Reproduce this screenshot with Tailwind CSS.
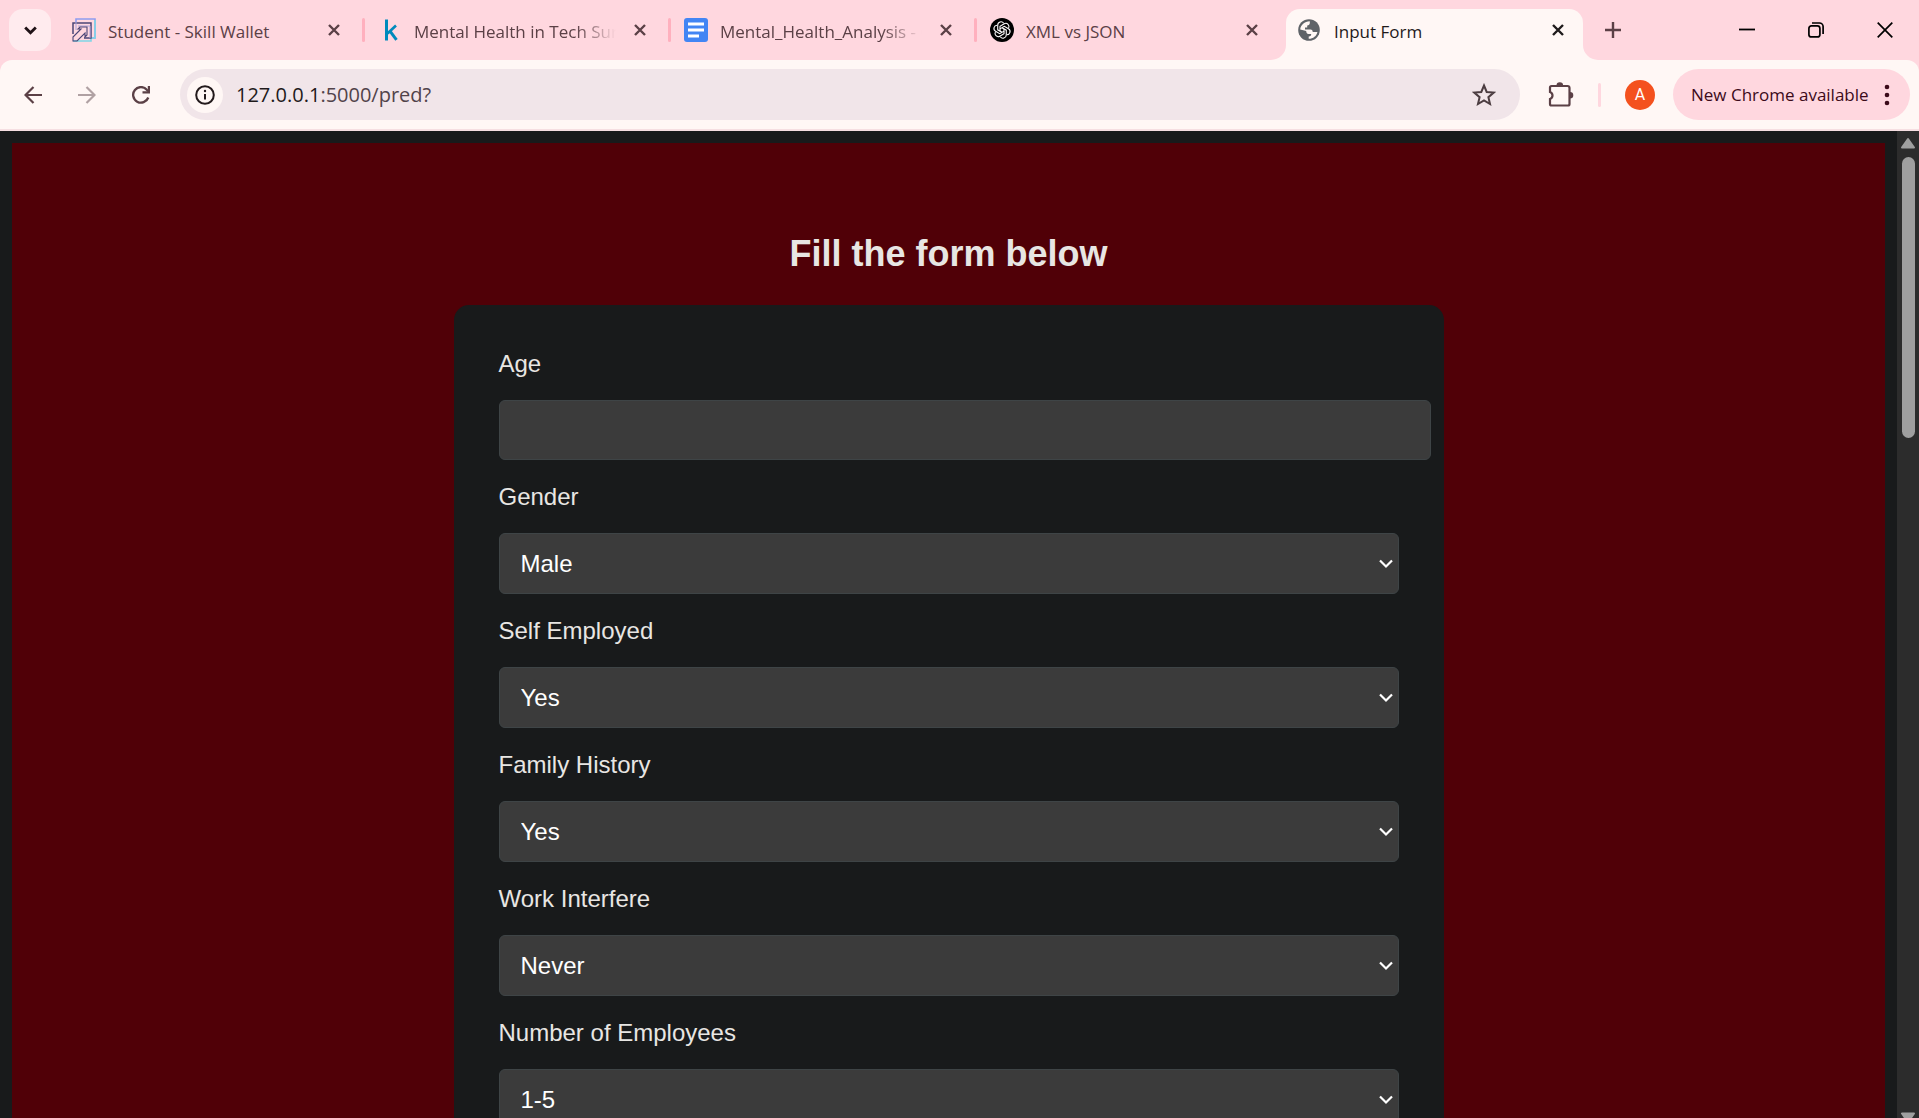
<!DOCTYPE html>
<html lang="en">
<head>
<meta charset="utf-8">
<meta name="viewport" content="width=device-width, initial-scale=1">
<title>Input Form</title>
<script src="https://cdn.jsdelivr.net/npm/@tailwindcss/browser@4"></script>
</head>
<body class="flex h-screen flex-col overflow-hidden bg-[#ffd7df] font-['Open_Sans','Noto_Sans',sans-serif] text-[17px] text-[#5b4046]">

<svg class="hidden" aria-hidden="true">
  <symbol id="x" viewBox="0 0 16 16"><path d="M3 3l10 10M13 3L3 13" fill="none" stroke="currentColor" stroke-width="2.4"/></symbol>
  <symbol id="chev" viewBox="0 0 14 10"><path d="M1 1.5l6 6 6-6" fill="none" stroke="currentColor" stroke-width="2.2"/></symbol>
</svg>

<!-- Tab strip -->
<header class="flex h-[60px] shrink-0 items-stretch">
  <button aria-label="Search tabs" class="my-[9px] ml-[9px] mr-2 flex w-[42px] shrink-0 items-center justify-center rounded-[14px] bg-[#ffebee] text-[#1f1216]">
    <svg class="h-[9px] w-[13px]" viewBox="0 0 13 9"><path d="M1.2 1.4l5.3 5.3 5.3-5.3" fill="none" stroke="currentColor" stroke-width="2.8"/></svg>
  </button>
  <nav class="flex min-w-0 flex-1 items-stretch" aria-label="Tabs">
    <div class="flex min-w-0 max-w-[306px] flex-1 items-center pl-[13px]">
      <svg class="size-6 shrink-0" viewBox="0 0 24 24" fill="none">
        <path d="M4 4V1h19v19h-3" stroke="#8f9df0" stroke-width="1.6"/><path d="M23 2v18h-4M1 23h18v-3" stroke="#7fd6e6" stroke-width="1.6"/>
        <path d="M1 16V5h18v15h-7" stroke="#4b4577" stroke-width="1.5"/><path d="M4 4v8M6 8h12v12" stroke="#a9a4dc"/>
        <path d="M1 23v-4l8-8H6l2-2h7v8l-2 2v-4l-8 8z" stroke="#4b4577" stroke-width="1.1"/>
      </svg>
      <a href="#" class="ml-3 mr-4 min-w-0 flex-1 overflow-hidden whitespace-nowrap pt-1">Student - Skill Wallet</a>
      <button aria-label="Close tab" class="mr-5"><svg class="size-4"><use href="#x"/></svg></button>
      <span class="h-6 w-[3px] shrink-0 rounded-sm bg-[#ffb0be]"></span>
    </div>
    <div class="flex min-w-0 max-w-[306px] flex-1 items-center pl-[13px]">
      <svg class="size-6 shrink-0" viewBox="0 0 24 24" fill="none" stroke="#008abc" stroke-width="3"><path d="M8.500 1.500v21"/><path d="M18 7.500L9.500 15.500" stroke-width="2.600"/><path d="M12 13.200l6.500 8.600"/></svg>
      <a href="#" class="ml-3 mr-4 min-w-0 flex-1 overflow-hidden whitespace-nowrap pt-1 [mask-image:linear-gradient(to_right,#000_80%,transparent)]">Mental Health in Tech Survey</a>
      <button aria-label="Close tab" class="mr-5"><svg class="size-4"><use href="#x"/></svg></button>
      <span class="h-6 w-[3px] shrink-0 rounded-sm bg-[#ffb0be]"></span>
    </div>
    <div class="flex min-w-0 max-w-[306px] flex-1 items-center pl-[13px]">
      <svg class="size-6 shrink-0" viewBox="0 0 24 24"><rect width="24" height="24" rx="3" fill="#4285f4"/><path d="M4 6h16M4 12h16M4 18h11" stroke="#fff" stroke-width="3"/></svg>
      <a href="#" class="ml-3 mr-4 min-w-0 flex-1 overflow-hidden whitespace-nowrap pt-1 [mask-image:linear-gradient(to_right,#000_80%,transparent)]">Mental_Health_Analysis - Google Docs</a>
      <button aria-label="Close tab" class="mr-5"><svg class="size-4"><use href="#x"/></svg></button>
      <span class="h-6 w-[3px] shrink-0 rounded-sm bg-[#ffb0be]"></span>
    </div>
    <div class="flex min-w-0 max-w-[306px] flex-1 items-center pl-[13px]">
      <svg class="size-6 shrink-0" viewBox="0 0 24 24" fill="none" stroke="#fff" stroke-width="1.100">
        <circle cx="12" cy="12" r="12" fill="#000" stroke="none"/>
        <g id="petal"><path d="M10 13.200V8.200l4.200-2.400a3.200 3.200 0 0 1 4.400 4.300"/></g>
        <use href="#petal" transform="rotate(60 12 12)"/><use href="#petal" transform="rotate(120 12 12)"/><use href="#petal" transform="rotate(180 12 12)"/><use href="#petal" transform="rotate(240 12 12)"/><use href="#petal" transform="rotate(300 12 12)"/>
      </svg>
      <a href="#" class="ml-3 mr-4 min-w-0 flex-1 overflow-hidden whitespace-nowrap pt-1">XML vs JSON</a>
      <button aria-label="Close tab" class="mr-5"><svg class="size-4"><use href="#x"/></svg></button>
      <span class="h-6 w-[3px] shrink-0"></span>
    </div>
    <div class="relative ml-[3px] mt-[9px] flex min-w-0 max-w-[297px] flex-1 items-center rounded-t-[14px] bg-[#fff7f5] pb-[9px] pl-[11px] text-[#1f1a1b]">
      <svg class="absolute -left-[15px] bottom-0 size-[15px]" viewBox="0 0 15 15"><path d="M15 0v15H0A15 15 0 0 0 15 0" fill="#fff7f5"/></svg>
      <svg class="absolute -right-[15px] bottom-0 size-[15px]" viewBox="0 0 15 15"><path d="M0 0v15h15A15 15 0 0 1 0 0" fill="#fff7f5"/></svg>
      <svg class="size-6 shrink-0" viewBox="0 0 24 24"><circle cx="12" cy="12" r="10.800" fill="#5f6368"/><path d="M3.200 11.500C3.700 7 7.500 3.400 12.800 3.300V5c0 1.500-1 2.200-2.600 2.400v2.100H8v1.900h5.500c1.600 0 2.200 1 2.200 2.500h4.700c-.8 4-4 6.700-8.700 6.800v-2.200c1.900-.2 2.500-1 2.500-2.600h-2.700c-1.700 0-2.300-1.500-2.300-2.900z" fill="#fff7f5"/></svg>
      <a href="#" class="ml-[13px] mr-4 min-w-0 flex-1 overflow-hidden whitespace-nowrap pt-1">Input Form</a>
      <button aria-label="Close tab" class="mr-[17px]"><svg class="size-4"><use href="#x"/></svg></button>
    </div>
    <button aria-label="New tab" class="ml-[22px] shrink-0"><svg class="size-4" viewBox="0 0 16 16"><path d="M8 0v16M0 8h16" stroke="currentColor" stroke-width="2.400"/></svg></button>
  </nav>
  <div class="flex shrink-0 items-center gap-[53px] pr-[26px] text-black">
    <button aria-label="Minimize"><svg class="size-4" viewBox="0 0 16 16"><path d="M0 7.500h16" stroke="currentColor" stroke-width="1.800"/></svg></button>
    <button aria-label="Restore"><svg class="size-4" viewBox="0 0 16 16" fill="none" stroke="currentColor" stroke-width="1.700"><rect x=".9" y="3.900" width="11" height="11" rx="2.500"/><path d="M4 1h7.500a3.600 3.600 0 0 1 3.600 3.600V12"/></svg></button>
    <button aria-label="Close window"><svg class="size-4" viewBox="0 0 16 16"><path d="M.7.7l14.600 14.600M15.300.7L.7 15.300" stroke="currentColor" stroke-width="1.700"/></svg></button>
  </div>
</header>

<!-- Toolbar -->
<div class="flex h-[71px] shrink-0 items-center rounded-t-[12px] border-b-2 border-[#f6dfe2] bg-[#fff7f5] pl-6 pr-[9px]">
  <button aria-label="Back"><svg class="size-[18px]" viewBox="0 0 18 18" fill="none" stroke="currentColor" stroke-width="2.200"><path d="M18 9H1.800M9.500 1L1.500 9l8 8"/></svg></button>
  <button aria-label="Forward" class="ml-9 text-[#b0a1a3]"><svg class="size-[18px]" viewBox="0 0 18 18" fill="none" stroke="currentColor" stroke-width="2.200"><path d="M0 9h16.200M8.500 1l8 8-8 8"/></svg></button>
  <button aria-label="Reload" class="ml-9"><svg class="size-[18px]" viewBox="0 0 18 18"><path d="M16.300 11.500A7.800 7.800 0 1 1 14.800 3.700l1.400 1.500" fill="none" stroke="currentColor" stroke-width="2.300"/><path d="M18 0v7.500h-7.500V5.300h5.300V0z" fill="currentColor"/></svg></button>
  <form class="ml-[30px] flex h-[51px] min-w-0 flex-1 items-center rounded-full bg-[#f1e5e9] pl-[7px] pr-6">
    <button type="button" aria-label="Site information" class="flex size-9 shrink-0 items-center justify-center rounded-full bg-[#fff7f5] text-[#231a1c]">
      <svg class="size-5" viewBox="0 0 20 20"><circle cx="10" cy="10" r="8.800" fill="none" stroke="currentColor" stroke-width="2"/><path d="M10 9v5.500" stroke="currentColor" stroke-width="2"/><circle cx="10" cy="6" r="1.200" fill="currentColor"/></svg>
    </button>
    <div contenteditable="true" role="textbox" aria-label="Address" class="ml-[13px] min-w-0 flex-1 truncate text-xl text-[#51434a]"><span class="text-[#1f1a1b]">127.0.0.1</span>:5000/pred?</div>
    <button type="button" aria-label="Bookmark this page" class="text-[#4c3d41]"><svg class="size-6" viewBox="0 0 24 24"><path d="M12 2.500l2.700 6.500 7 .6-5.300 4.600 1.600 6.800-6-3.600L6 21l1.600-6.800L2.300 9.600l7-.6z" fill="none" stroke="currentColor" stroke-width="2"/></svg></button>
  </form>
  <button aria-label="Extensions" class="ml-7"><svg class="size-[26px]" viewBox="0 0 26 26"><path d="M3.500 4h16a2 2 0 0 1 2 2v16a1.500 1.500 0 0 1-1.500 1.500H3.500A1.500 1.500 0 0 1 2 22v-5a3.700 3.700 0 0 0 0-7V5.500A1.500 1.500 0 0 1 3.500 4z" fill="none" stroke="currentColor" stroke-width="2.200"/><path d="M8.500 3.500a3.300 3.300 0 0 1 6.600 0zM22 10a3.300 3.300 0 0 1 0 6.600z" fill="currentColor"/></svg></button>
  <span class="ml-6 h-6 w-[3px] shrink-0 rounded-sm bg-[#ffd7df]"></span>
  <button aria-label="Profile" class="ml-6 size-[30px] shrink-0 rounded-full bg-[#f4511e] font-[Roboto,sans-serif] text-base text-white">A</button>
  <button class="ml-[18px] flex h-[51px] w-[237px] shrink-0 items-center justify-between rounded-full bg-[#ffd7df] pl-[18px] pr-5 text-[#3c0a1a]">
    <span class="whitespace-nowrap">New Chrome available</span>
    <svg class="h-[22px] w-1.5" viewBox="0 0 6 22" fill="currentColor"><circle cx="3" cy="3" r="2.300"/><circle cx="3" cy="11" r="2.300"/><circle cx="3" cy="19" r="2.300"/></svg>
  </button>
</div>

<!-- Page -->
<div class="flex min-h-0 flex-1 bg-[#181a1b] font-['Liberation_Sans',Arial,sans-serif]">
  <main class="min-w-0 flex-1 overflow-hidden p-3">
    <div class="flex min-h-full flex-col items-center bg-[#500007] pt-[90px] text-[#e8e6e3]">
      <h1 class="mb-[31px] text-4xl/[41px] font-bold">Fill the form below</h1>
      <form class="flex w-full max-w-[990px] flex-col gap-[23px] rounded-[15px] bg-[#181a1b] p-[45px] text-2xl/7">
        <div class="flex flex-col gap-[22px]">
          <label for="age">Age</label>
          <input id="age" type="text" class="h-[60px] w-[calc(100%+32px)] rounded-md border border-[#3e4446] bg-[#3b3b3b] px-[21px] text-white">
        </div>
        <div class="flex flex-col gap-[22px]">
          <label for="gender">Gender</label>
          <div class="grid items-center">
            <select id="gender" class="col-start-1 row-start-1 h-[61px] w-full appearance-none rounded-md border border-[#3e4446] bg-[#3b3b3b] px-[21px] text-white"><option>Male</option><option>Female</option></select>
            <svg class="pointer-events-none col-start-1 row-start-1 mr-1.5 h-2.5 w-3.5 justify-self-end text-white"><use href="#chev"/></svg>
          </div>
        </div>
        <div class="flex flex-col gap-[22px]">
          <label for="self">Self Employed</label>
          <div class="grid items-center">
            <select id="self" class="col-start-1 row-start-1 h-[61px] w-full appearance-none rounded-md border border-[#3e4446] bg-[#3b3b3b] px-[21px] text-white"><option>Yes</option><option>No</option></select>
            <svg class="pointer-events-none col-start-1 row-start-1 mr-1.5 h-2.5 w-3.5 justify-self-end text-white"><use href="#chev"/></svg>
          </div>
        </div>
        <div class="flex flex-col gap-[22px]">
          <label for="family">Family History</label>
          <div class="grid items-center">
            <select id="family" class="col-start-1 row-start-1 h-[61px] w-full appearance-none rounded-md border border-[#3e4446] bg-[#3b3b3b] px-[21px] text-white"><option>Yes</option><option>No</option></select>
            <svg class="pointer-events-none col-start-1 row-start-1 mr-1.5 h-2.5 w-3.5 justify-self-end text-white"><use href="#chev"/></svg>
          </div>
        </div>
        <div class="flex flex-col gap-[22px]">
          <label for="work">Work Interfere</label>
          <div class="grid items-center">
            <select id="work" class="col-start-1 row-start-1 h-[61px] w-full appearance-none rounded-md border border-[#3e4446] bg-[#3b3b3b] px-[21px] text-white"><option>Never</option><option>Often</option></select>
            <svg class="pointer-events-none col-start-1 row-start-1 mr-1.5 h-2.5 w-3.5 justify-self-end text-white"><use href="#chev"/></svg>
          </div>
        </div>
        <div class="flex flex-col gap-[22px]">
          <label for="employees">Number of Employees</label>
          <div class="grid items-center">
            <select id="employees" class="col-start-1 row-start-1 h-[61px] w-full appearance-none rounded-md border border-[#3e4446] bg-[#3b3b3b] px-[21px] text-white"><option>1-5</option><option>6-25</option></select>
            <svg class="pointer-events-none col-start-1 row-start-1 mr-1.5 h-2.5 w-3.5 justify-self-end text-white"><use href="#chev"/></svg>
          </div>
        </div>
      </form>
    </div>
  </main>
  <!-- Scrollbar -->
  <div class="flex w-[22px] shrink-0 flex-col items-center overflow-hidden bg-[#2c2c2c] pt-1.5" aria-hidden="true">
    <svg class="h-3 w-4 shrink-0" viewBox="0 0 16 12"><path d="M8 2l6 8.500H2z" fill="#9f9f9f" stroke="#9f9f9f" stroke-width="2" stroke-linejoin="round"/></svg>
    <div class="mt-2 h-[281px] w-[13px] shrink-0 rounded-full bg-[#9f9f9f]"></div>
    <svg class="mt-auto h-1.5 w-4 shrink-0" viewBox="0 0 16 6"><path d="M2 1.500h12L8 10z" fill="#9f9f9f" stroke="#9f9f9f" stroke-width="2" stroke-linejoin="round"/></svg>
  </div>
</div>
</body>
</html>
